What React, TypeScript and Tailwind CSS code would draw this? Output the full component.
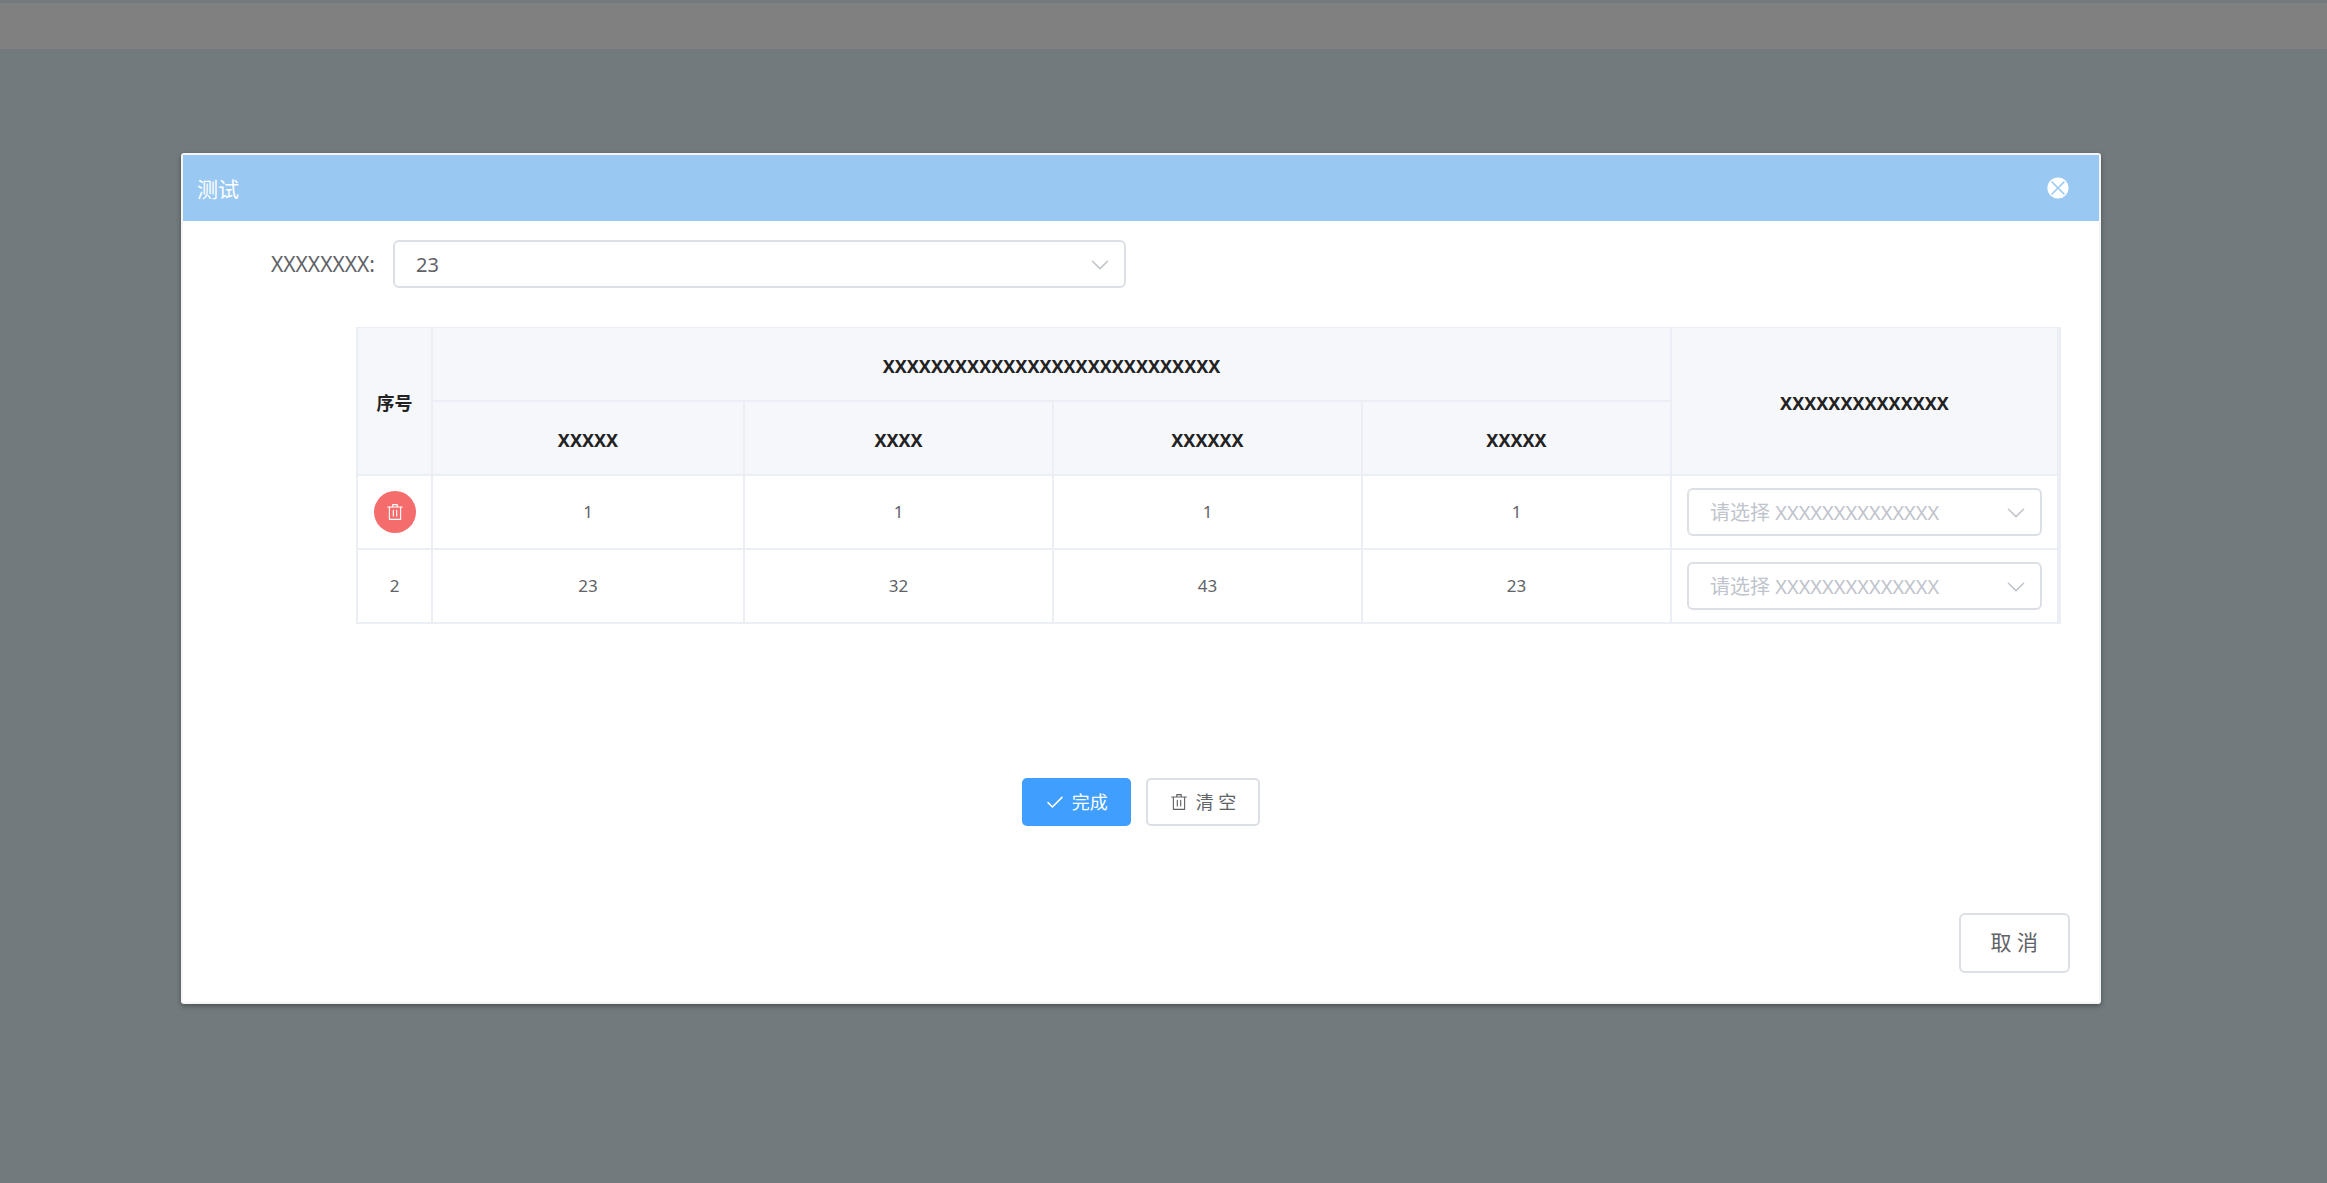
import type { ReactNode } from 'react';
import { clsx } from 'clsx';

const columns = ['XXXXX', 'XXXX', 'XXXXXX', 'XXXXX'];

const rows = [
  { id: 1, removable: true, values: [1, 1, 1, 1] },
  { id: 2, removable: false, values: [23, 32, 43, 23] },
];

function TrashIcon() {
  return (
    <svg viewBox="0 0 1024 1024" className="h-[18px] w-[18px]" fill="currentColor" aria-hidden="true">
      <path d="M160 256H96a32 32 0 0 1 0-64h256V95.936a32 32 0 0 1 32-32h256a32 32 0 0 1 32 32V192h256a32 32 0 1 1 0 64h-64v672a32 32 0 0 1-32 32H192a32 32 0 0 1-32-32V256zm448-64v-64H416v64h192zM224 896h576V256H224v640zm192-128a32 32 0 0 1-32-32V416a32 32 0 0 1 64 0v320a32 32 0 0 1-32 32zm192 0a32 32 0 0 1-32-32V416a32 32 0 0 1 64 0v320a32 32 0 0 1-32 32z" />
    </svg>
  );
}

function CheckIcon() {
  return (
    <svg viewBox="0 0 18 18" className="h-[18px] w-[18px]" fill="none" stroke="currentColor" strokeWidth="1.5" aria-hidden="true">
      <path d="M2 9.6l4.4 4.4L16 4.4" strokeLinecap="round" strokeLinejoin="round" />
    </svg>
  );
}

function CloseIcon() {
  return (
    <svg viewBox="0 0 22 22" className="h-[22px] w-[22px]" aria-hidden="true">
      <circle cx="11" cy="11" r="10.6" fill="#fff" />
      <path d="M5 5l12 12M17 5L5 17" stroke="#99c9f3" strokeWidth="1.6" strokeLinecap="round" />
    </svg>
  );
}

type SelectProps = {
  id: string;
  label?: string;
  placeholder?: boolean;
  className?: string;
  children: ReactNode;
};

function Select({ id, label, placeholder, className, children }: SelectProps) {
  return (
    <div className={clsx('relative', className)}>
      <select
        id={id}
        aria-label={label}
        className={clsx(
          'block h-12 w-full appearance-none rounded-md border-2 border-[#dcdfe6] bg-white pt-px pr-12 pl-[21px] text-[20px] outline-none',
          placeholder ? 'text-[#c0c4cc]' : 'text-[#606266]',
        )}
      >
        {children}
      </select>
      <svg
        viewBox="0 0 18 10"
        className="pointer-events-none absolute top-5 right-[17px] h-[10px] w-[18px]"
        fill="none"
        stroke="#c0c4cc"
        strokeWidth="1.5"
        aria-hidden="true"
      >
        <path d="M1.4 1.2L9 8.6l7.6-7.4" strokeLinecap="round" strokeLinejoin="round" />
      </svg>
    </div>
  );
}

const cell = 'h-[74px] border-r-2 border-b-2 border-[#ebeef5] p-0 text-center';
const headCell = 'h-[74px] border-r-2 border-b-2 border-[#ebeef5] px-0 pt-[5px] pb-0 text-center text-[18px] font-bold';

export default function App() {
  return (
    <div className="min-h-screen bg-[#727a7d] pt-[3px] font-['Noto_Sans','Noto_Sans_CJK_SC',sans-serif] text-[#606266]">
      <div className="h-[46px] bg-[#808080]" />

      <div className="pt-[104px] pr-[226px] pb-16 pl-[181px]">
        <div
          role="dialog"
          aria-labelledby="dialog-title"
          className="rounded-[3px] border-2 border-[#f5f5f5] bg-white shadow-[0_2px_5px_rgba(0,0,0,0.35)]"
        >
          <header className="flex h-[66px] items-center justify-between bg-[#99c9f3] pr-[30px] pl-[14px]">
            <h2 id="dialog-title" className="pt-[3px] text-[21px] text-white">
              测试
            </h2>
            <button type="button" aria-label="关闭">
              <CloseIcon />
            </button>
          </header>

          <div className="mt-[19px] flex items-center">
            <label htmlFor="main-select" className="w-[210px] shrink-0 pt-[2px] pr-[18px] text-right text-[21px]">
              XXXXXXXX:
            </label>
            <Select id="main-select" className="w-[733px]">
              <option>23</option>
            </Select>
          </div>

          <div className="mt-[39px] mr-[38px] ml-[173px] border-t border-r-2 border-l-2 border-[#ebeef5]">
            <table className="w-full table-fixed border-separate border-spacing-0 text-[17px]">
              <colgroup>
                <col className="w-[75px]" />
                <col className="w-[312px]" />
                <col className="w-[309px]" />
                <col className="w-[309px]" />
                <col className="w-[309px]" />
                <col />
              </colgroup>
              <thead className="bg-[#f5f7fb] text-[#222]">
                <tr>
                  <th rowSpan={2} className={headCell}>
                    序号
                  </th>
                  <th colSpan={4} className={headCell}>
                    XXXXXXXXXXXXXXXXXXXXXXXXXXXX
                  </th>
                  <th rowSpan={2} className={headCell}>
                    XXXXXXXXXXXXXX
                  </th>
                </tr>
                <tr>
                  {columns.map((name, i) => (
                    <th key={i} className={headCell}>
                      {name}
                    </th>
                  ))}
                </tr>
              </thead>
              <tbody>
                {rows.map((row) => (
                  <tr key={row.id}>
                    <td className={cell}>
                      {row.removable ? (
                        <button
                          type="button"
                          aria-label="删除"
                          className="mx-auto flex h-[42px] w-[42px] items-center justify-center rounded-full bg-[#f56c6c] text-white"
                        >
                          <TrashIcon />
                        </button>
                      ) : (
                        row.id
                      )}
                    </td>
                    {row.values.map((value, i) => (
                      <td key={i} className={cell}>
                        {value}
                      </td>
                    ))}
                    <td className={clsx(cell, 'px-[15px]')}>
                      <Select id={`row-select-${row.id}`} label="请选择" placeholder>
                        <option>请选择 XXXXXXXXXXXXXX</option>
                      </Select>
                    </td>
                  </tr>
                ))}
              </tbody>
            </table>
          </div>

          <div className="mt-[154px] flex justify-center gap-[15px] text-[18px]">
            <button
              type="button"
              className="flex h-12 items-center gap-2 rounded-[5px] bg-[#409eff] pr-[23px] pl-6 text-white"
            >
              <CheckIcon />
              完成
            </button>
            <button
              type="button"
              className="flex h-12 items-center gap-2 rounded-[5px] border-2 border-[#dcdfe6] bg-white px-[22px]"
            >
              <TrashIcon />
              清 空
            </button>
          </div>

          <footer className="mt-[87px] flex justify-end pr-[29px] pb-[29px]">
            <button type="button" className="h-[60px] rounded-md border-2 border-[#dcdfe6] bg-white px-[30px] text-[21px]">
              取 消
            </button>
          </footer>
        </div>
      </div>
    </div>
  );
}
